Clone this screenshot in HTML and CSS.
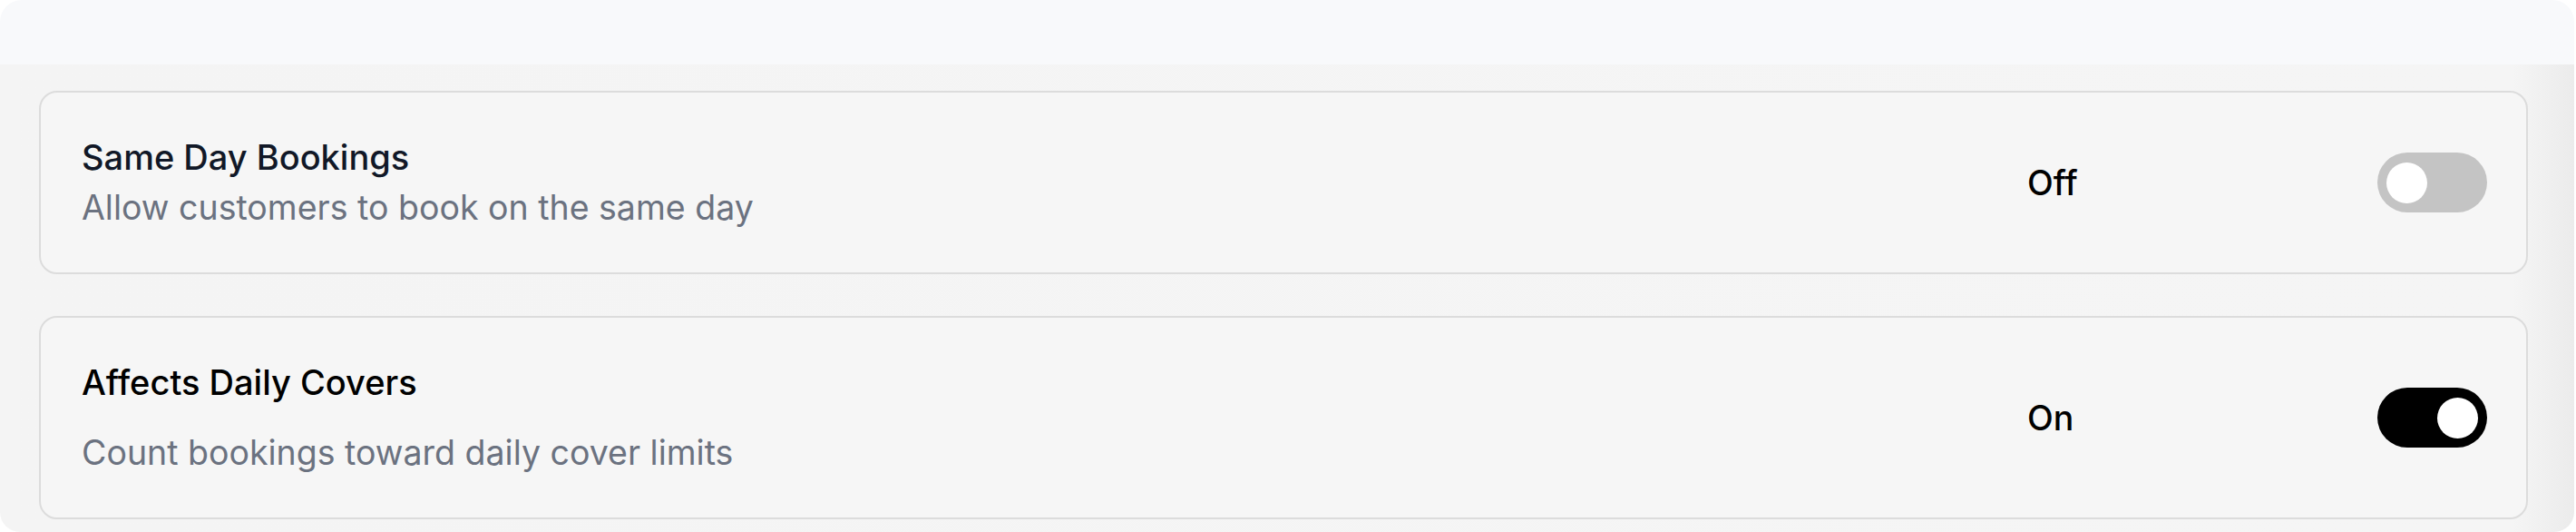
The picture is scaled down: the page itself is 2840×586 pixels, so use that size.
FILE: index.html
```html
<!DOCTYPE html>
<html lang="en">
<head>
<meta charset="utf-8">
<title>Booking settings</title>
<link rel="stylesheet" href="styles.css">
</head>
<body>
<div class="panel">
  <div class="panel-header"></div>
  <div class="panel-body">
    <div class="setting">
      <div class="setting-text">
        <div class="setting-title">Same Day Bookings</div>
        <div class="setting-desc">Allow customers to book on the same day</div>
      </div>
      <div class="setting-control">
        <span class="state">Off</span>
        <span class="toggle"><span class="knob"></span></span>
      </div>
    </div>
    <div class="setting setting-tall">
      <div class="setting-text">
        <div class="setting-title title-black">Affects Daily Covers</div>
        <div class="setting-desc desc-spaced">Count bookings toward daily cover limits</div>
      </div>
      <div class="setting-control">
        <span class="state">On</span>
        <span class="toggle toggle-on"><span class="knob"></span></span>
      </div>
    </div>
  </div>
</div>
</body>
</html>
```
FILE: styles.css
```css
html, body {
  margin: 0;
  padding: 0;
  background: #ffffff;
}
body {
  font-family: Inter, "Noto Sans", "Liberation Sans", sans-serif;
  width: 2840px;
  height: 586px;
}
.panel {
  width: 2838px;
  display: flex;
  flex-direction: column;
}
.panel-header {
  height: 71px;
  background: #f8f9fb;
  border-radius: 24px 24px 0 0;
}
.panel-body {
  background: linear-gradient(to right, #f4f4f4 0, #f5f5f5 2770px, #ebebeb 100%);
  border-radius: 0 0 22px 22px;
  padding: 29px 51px 14px 43px;
  display: flex;
  flex-direction: column;
  gap: 46px;
}
.setting {
  box-sizing: border-box;
  height: 202px;
  border: 2px solid #dcdcdc;
  border-radius: 20px;
  background: #f6f6f6;
  padding: 0 43px 0 45px;
  display: flex;
  align-items: center;
  justify-content: space-between;
}
.setting-tall {
  height: 224px;
}
.setting-text {
  display: flex;
  flex-direction: column;
}
.setting-title {
  font-size: 38px;
  line-height: 55px;
  font-weight: 500;
  color: #111827;
}
.title-black {
  color: #000000;
}
.setting-desc {
  font-size: 37.5px;
  line-height: 55px;
  color: #6b7280;
}
.desc-spaced {
  margin-top: 22px;
}
.setting-control {
  display: flex;
  align-items: center;
}
.state {
  width: 386px;
  font-size: 37.5px;
  font-weight: 500;
  color: #000000;
}
.toggle {
  box-sizing: border-box;
  width: 121px;
  height: 66px;
  border-radius: 33px;
  background: #c4c4c4;
  padding: 0 10px;
  display: flex;
  align-items: center;
}
.toggle-on {
  background: #000000;
  justify-content: flex-end;
}
.knob {
  width: 45px;
  height: 45px;
  border-radius: 50%;
  background: #ffffff;
}
```
